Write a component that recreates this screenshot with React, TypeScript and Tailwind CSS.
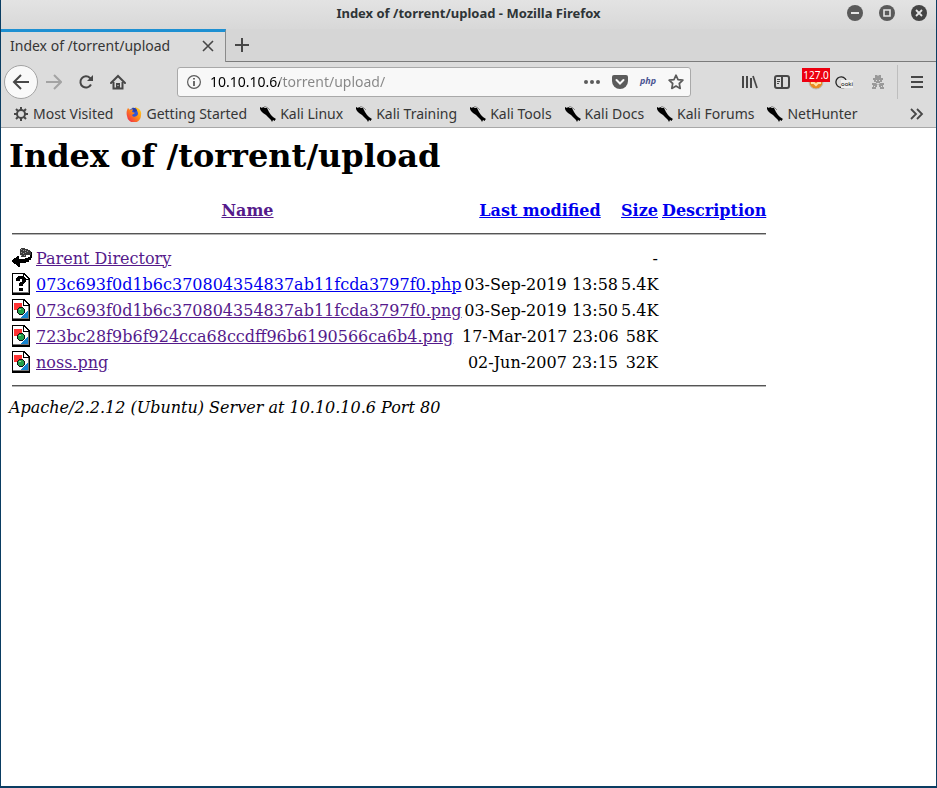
import type { ReactNode } from "react";

const link = "text-[#0000ee] underline";
const visited = "text-[#551a8b] underline";

function PageIcon({ kind }: { kind: string }) {
  if (kind === "back")
    return (
      <svg width="20" height="22" viewBox="0 0 20 22" shapeRendering="crispEdges" className="block">
        <path d="M8 2h1V1h4v1h3v1h2v1h1v4h-5v2H9V8H8z" fill="#3a3a3a" />
        <path d="M9 2h1v1H9zM11 3h1v1h-1zM9 5h1v1H9zM13 3h1v1h-1zM11 6h1v1h-1zM9 8h1v1H9zM13 5h1v1h-1zM15 4h1v1h-1zM12 8h1v1h-1z" fill="#999" />
        <path d="M20 5v6h-1v2h-2v2h-3v1H8v4H6v-1H5v-1H4v-1H2v-1H1v-1H0v-2h1v-1h1v-1h2v-1h1V9h2v3h6v-1h3v-1h2V8h1V5z" fill="#000" />
      </svg>
    );
  return (
    <svg width="20" height="22" viewBox="0 0 20 22" shapeRendering="crispEdges" className="block">
      <path d="M0 0h12l6 6v16H0z" fill="#000" />
      <path d="M1 1h10v6h6v13H1z" fill="#fff" />
      <path d="M12 2l4 4h-4z" fill="#fff" />
      <path d="M16 7h1v13H1v-1h15z" fill="#777" />
      {kind === "unknown" ? (
        <path d="M4 8V5h1V4h1V3h6v1h1v1h1v4h-1v1h-1v1h-1v2H7v-3h1V9h2V6H8v2zM7 15h4v3H7z" fill="#000" />
      ) : (
        <>
          <path d="M2 4h8v7H2z" fill="#ff3333" />
          <path d="M16 11v8H8z" fill="#1684d0" />
          <circle cx="9" cy="12" r="4" fill="#111" />
          <circle cx="9" cy="12" r="3" fill="#22a04a" />
          <path d="M7 10h2v1H7z" fill="#8ed9a3" />
        </>
      )}
    </svg>
  );
}

function KaliIcon() {
  return (
    <svg width="16" height="16" viewBox="0 0 16 16" className="shrink-0">
      <path d="M0 1l2 1 1-1 2 1h2l1 2 1 2 2 3 2 2 3 2-1 1v1l-2-1-1 2-1-2-2-2-3-3-3-2-2-2-1-2z" fill="#000" />
      <path d="M4 0l4 2M8 2l2 2" stroke="#666" strokeWidth=".7" />
    </svg>
  );
}

function GearIcon() {
  return (
    <svg width="16" height="16" viewBox="0 0 16 16" className="shrink-0" fill="none" stroke="#474747">
      <circle cx="8" cy="8" r="4" strokeWidth="2" />
      <path d="M8 1v3M8 12v3M1 8h3M12 8h3M3 3l2 2M11 11l2 2M3 13l2-2M11 5l2-2" strokeWidth="2" />
    </svg>
  );
}

function FirefoxIcon() {
  return (
    <svg width="16" height="16" viewBox="0 0 16 16" className="shrink-0">
      <defs>
        <linearGradient id="fox" x1="1" y1="0" x2="0" y2="1">
          <stop offset="0" stopColor="#ffe22e" />
          <stop offset=".45" stopColor="#ff8b16" />
          <stop offset="1" stopColor="#ed1955" />
        </linearGradient>
      </defs>
      <circle cx="8" cy="8" r="6" fill="#3157d5" />
      <path d="M2 2l2 2 3-1-1 3 3 1-3 2c1 3 5 2 6-1 0-3-2-4-3-7 4 1 7 4 6 8a7 7 0 0 1-14 1C0 6 1 4 2 2z" fill="url(#fox)" />
      <path d="M6 2c3-1 5 1 5 3L8 6z" fill="#273fa8" />
    </svg>
  );
}

function Bookmark({ icon, children }: { icon: ReactNode; children: string }) {
  return (
    <a href="#" className="flex items-center gap-1 whitespace-nowrap">
      {icon}
      {children}
    </a>
  );
}

function IconButton({ label, children, className = "" }: { label: string; children: ReactNode; className?: string }) {
  return (
    <button aria-label={label} className={`flex h-8 w-8 shrink-0 items-center justify-center ${className}`}>
      {children}
    </button>
  );
}

function TitleBar() {
  return (
    <header className="relative flex h-[29px] items-center justify-end bg-linear-to-b from-[#e3e3e3] to-[#d8d8d8] pr-[9px] pb-[3px]">
      <h2 className="absolute inset-x-0 top-0 text-center text-[13px] leading-[26px] font-bold text-[#2e3436]">
        Index of /torrent/upload - Mozilla Firefox
      </h2>
      <div className="relative flex gap-4">
        <button aria-label="Minimize">
          <svg width="16" height="16" className="block"><circle cx="8" cy="8" r="8" fill="#5a5a5a" /><path d="M4 8h8" stroke="#e5e5e5" strokeWidth="2" /></svg>
        </button>
        <button aria-label="Maximize">
          <svg width="16" height="16" className="block"><circle cx="8" cy="8" r="8" fill="#5a5a5a" /><path d="M5 5h6v6H5z" fill="none" stroke="#e5e5e5" strokeWidth="1.6" /></svg>
        </button>
        <button aria-label="Close window">
          <svg width="16" height="16" className="block"><circle cx="8" cy="8" r="8" fill="#444" /><path d="M5 5l6 6M11 5l-6 6" stroke="#e5e5e5" strokeWidth="1.8" /></svg>
        </button>
      </div>
    </header>
  );
}

function TabStrip() {
  return (
    <div className="flex h-[33px] bg-[#d6d6d6]">
      <div className="flex w-[225px] items-center justify-between border-t-[3px] border-r border-t-[#1e90d2] border-r-[#8b8b8b] bg-[#dcdcdc] pr-2.5 pb-0.5 pl-[9px]">
        <span className="text-sm">Index of /torrent/upload</span>
        <button aria-label="Close tab">
          <svg width="14" height="14" viewBox="0 0 14 14" className="block"><path d="M2 2l10 10M12 2L2 12" stroke="#474747" strokeWidth="1.6" /></svg>
        </button>
      </div>
      <div className="flex flex-1 items-center border-b border-[#7b7b7b]">
        <IconButton label="New tab">
          <svg width="16" height="16" stroke="#474747" strokeWidth="2"><path d="M8 1v14M1 8h14" /></svg>
        </IconButton>
      </div>
    </div>
  );
}

function NavBar() {
  return (
    <nav className="flex h-10 items-center bg-[#dcdcdc] pr-[3px] pl-[3px]">
      <button aria-label="Back" className="flex h-[34px] w-[34px] shrink-0 items-center justify-center rounded-full border border-[#a3a3a3] bg-[#f9f9f9]">
        <svg width="18" height="16" viewBox="0 0 18 16" fill="none" stroke="#474747" strokeWidth="2"><path d="M17 8H2M9 1L2 8l7 7" /></svg>
      </button>
      <IconButton label="Forward">
        <svg width="16" height="16" viewBox="0 0 16 16" fill="none" stroke="#a3a3a3" strokeWidth="2"><path d="M0 8h14M8 1l7 7-7 7" /></svg>
      </IconButton>
      <IconButton label="Reload">
        <svg width="16" height="16" viewBox="0 0 16 16" fill="none" stroke="#474747" strokeWidth="2"><path d="M13 10.500A5.600 5.600 0 1 1 12 4l1 1.500" /><path d="M15 1v6H9z" fill="#474747" stroke="none" /></svg>
      </IconButton>
      <IconButton label="Home">
        <svg width="16" height="16" viewBox="0 0 16 16" fill="none" stroke="#474747" strokeWidth="2"><path d="M1 9l7-7 7 7" strokeLinecap="round" /><path d="M3.500 8v6.500h9V8" /><path d="M6 9h4v5H6z" fill="#474747" stroke="none" /><path d="M8 11v1" stroke="#dcdcdc" strokeWidth="1" /></svg>
      </IconButton>
      <div className="ml-[43px] flex h-[30px] min-w-0 flex-1 items-center rounded-[3px] border border-[#a9a9a9] bg-[#f8f8f8] pl-[9px]">
        <button aria-label="Site information">
          <svg width="14" height="14" viewBox="0 0 14 14" className="block" fill="none" stroke="#5b5b5b"><circle cx="7" cy="7" r="6.400" strokeWidth="1.200" /><path d="M7 3v1.600M7 6v5" strokeWidth="1.800" /></svg>
        </button>
        <input
          aria-label="Address"
          defaultValue="10.10.10.6/torrent/upload/"
          className="ml-[9px] min-w-0 flex-1 bg-linear-to-r from-black from-[70px] to-[#858585] to-[70px] bg-clip-text text-sm text-transparent outline-none"
        />
        <button aria-label="Page actions" className="flex w-7 justify-center">
          <svg width="16" height="16" fill="#5b5b5b"><circle cx="2" cy="8" r="2" /><circle cx="8" cy="8" r="2" /><circle cx="14" cy="8" r="2" /></svg>
        </button>
        <button aria-label="Save to Pocket" className="flex w-7 justify-center">
          <svg width="16" height="16" viewBox="0 0 16 16"><path d="M2 1h12q2 0 2 2v4a8 8 0 0 1-16 0V3q0-2 2-2z" fill="#5b5b5b" /><path d="M4.500 6L8 9.500 11.500 6" fill="none" stroke="#f8f8f8" strokeWidth="2" strokeLinecap="round" /></svg>
        </button>
        <button className="w-7 pb-0.5 text-[9px] font-bold text-[#4b5593] italic">php</button>
        <button aria-label="Bookmark this page" className="flex w-7 justify-center">
          <svg width="16" height="16" viewBox="0 0 16 16" fill="none" stroke="#5b5b5b" strokeWidth="1.700" strokeLinejoin="round"><path d="M8 1.200l2 4.400 4.900.6-3.600 3.300.9 4.900L8 12l-4.200 2.400.9-4.900L1.100 6.200 6 5.600z" /></svg>
        </button>
      </div>
      <IconButton label="Library" className="ml-[43px]">
        <svg width="16" height="16" fill="none" stroke="#474747" strokeWidth="2"><path d="M1 2v12M5 2v12M9 4v10" /><path d="M11 2l4 12" strokeWidth="1.700" /></svg>
      </IconButton>
      <IconButton label="Sidebars">
        <svg width="16" height="16" viewBox="0 0 16 16" fill="none" stroke="#474747"><rect x="1" y="2" width="14" height="12" rx="2" strokeWidth="2" /><path d="M8 2v12" strokeWidth="2" /><path d="M3 5.500h3M3 7.500h3M3 9.500h2" /></svg>
      </IconButton>
      <button aria-label="Proxy 127.0" className="relative flex h-8 w-9 items-center justify-center">
        <svg width="16" height="16" viewBox="0 0 16 16"><circle cx="8" cy="8" r="7" fill="#e88921" stroke="#bbb" /><path d="M3 9h3l2 2 2-2h3" stroke="#ffe0a6" strokeWidth="2" fill="none" /></svg>
        <span className="absolute top-[2px] left-1 h-3.5 w-7 bg-[#ed0010] text-center text-[10px] leading-3.5 text-white">127.0</span>
      </button>
      <button aria-label="Cookie manager" className="relative flex h-8 w-7 items-center">
        <svg width="18" height="14" viewBox="0 0 18 14" fill="none" stroke="#222"><path d="M12.500 7.500a5.300 5.300 0 1 0-5.300 5h3" strokeWidth="1.300" /></svg>
        <span className="absolute top-3.5 left-[7px] bg-[#f0f0f0] text-[6px] leading-2 text-black">ooki</span>
      </button>
      <IconButton label="Containers">
        <svg width="14" height="16" viewBox="0 0 14 16" fill="#999"><path d="M4 1h2l1 1 1-1h2v3h2v2h-1v2H9v1H5V8H3V6H2V4h2zM1 9h4l2 2 2-2h4v2h-1v2h1v2H9v-2H8v-2H6v2H5v2H1v-2h1v-2H1z" /><path d="M5 6h1v1H5zM8 6h1v1H8zM3 12h1v1H3zM10 12h1v1h-1z" fill="#ddd" /></svg>
      </IconButton>
      <div className="ml-[3px] h-[34px] w-px bg-[#bebebe]" />
      <IconButton label="Menu" className="ml-[3px]">
        <svg width="12" height="14" stroke="#474747" strokeWidth="2"><path d="M0 2h12M0 7h12M0 12h12" /></svg>
      </IconButton>
    </nav>
  );
}

function BookmarksBar() {
  const kali = ["Kali Linux", "Kali Training", "Kali Tools", "Kali Docs", "Kali Forums", "NetHunter"];
  return (
    <nav className="flex h-[26px] items-center gap-[13px] border-b border-[#a8a8a8] bg-[#dcdcdc] pr-3 pb-0.5 pl-3 text-sm">
      <Bookmark icon={<GearIcon />}>Most Visited</Bookmark>
      <Bookmark icon={<FirefoxIcon />}>Getting Started</Bookmark>
      {kali.map((k) => (
        <Bookmark key={k} icon={<KaliIcon />}>{k}</Bookmark>
      ))}
      <button aria-label="More bookmarks" className="ml-auto">
        <svg width="14" height="12" viewBox="0 0 14 12" className="block" fill="none" stroke="#474747" strokeWidth="1.800"><path d="M1 1l5 5-5 5M7 1l5 5-5 5" /></svg>
      </button>
    </nav>
  );
}

const files = [
  { icon: "back", name: "Parent Directory", date: "", size: "-", seen: true },
  { icon: "unknown", name: "073c693f0d1b6c370804354837ab11fcda3797f0.php", date: "03-Sep-2019 13:58", size: "5.4K", seen: false },
  { icon: "image", name: "073c693f0d1b6c370804354837ab11fcda3797f0.png", date: "03-Sep-2019 13:50", size: "5.4K", seen: true },
  { icon: "image", name: "723bc28f9b6f924cca68ccdff96b6190566ca6b4.png", date: "17-Mar-2017 23:06", size: "58K", seen: true },
  { icon: "image", name: "noss.png", date: "02-Jun-2007 23:15", size: "32K", seen: true },
];

function Rule() {
  return (
    <tr>
      <td colSpan={5} className="p-px">
        <hr className="my-2 h-0.5 border-t border-b border-t-[#555] border-b-[#b5b5b5]" />
      </td>
    </tr>
  );
}

function Listing() {
  return (
    <main className="flex-1 bg-white p-2 font-['DejaVu_Serif',serif] text-base leading-[19px] text-black">
      <h1 className="mb-5 text-[32px] leading-10 font-bold">Index of /torrent/upload</h1>
      <table className="w-[760px] table-fixed border-separate border-spacing-[2px] whitespace-nowrap">
        <colgroup>
          <col className="w-[22px]" />
          <col className="w-[425px]" />
          <col className="w-[156px]" />
          <col className="w-[39px]" />
          <col className="w-[106px]" />
        </colgroup>
        <thead>
          <tr className="h-6">
            <th className="p-px" />
            <th className="p-px"><a href="#" className={visited}>Name</a></th>
            <th className="p-px"><a href="#" className={link}>Last modified</a></th>
            <th className="p-px"><a href="#" className={link}>Size</a></th>
            <th className="p-px"><a href="#" className={link}>Description</a></th>
          </tr>
        </thead>
        <tbody>
          <Rule />
          {files.map((f) => (
            <tr key={f.name}>
              <td className="p-px"><PageIcon kind={f.icon} /></td>
              <td className="p-px"><a href="#" className={f.seen ? visited : link}>{f.name}</a></td>
              <td className="py-px text-right">{f.date}</td>
              <td className="p-px text-right">{f.size}</td>
              <td className="p-px" />
            </tr>
          ))}
          <Rule />
        </tbody>
      </table>
      <address className="italic">Apache/2.2.12 (Ubuntu) Server at 10.10.10.6 Port 80</address>
    </main>
  );
}

export default function App() {
  return (
    <div className="flex min-h-screen flex-col border-x border-b-2 border-[#0a3d62] bg-[#dcdcdc] font-['Noto_Sans',sans-serif] text-[#363636]">
      <TitleBar />
      <TabStrip />
      <NavBar />
      <BookmarksBar />
      <Listing />
    </div>
  );
}
